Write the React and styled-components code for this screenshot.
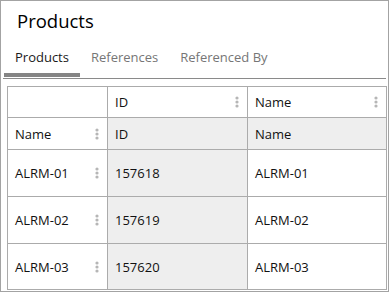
import { Fragment } from "react";
import styled, { createGlobalStyle } from "styled-components";

const GlobalStyle = createGlobalStyle`
  html, body {
    margin: 0;
    padding: 0;
    background: #ffffff;
  }
  body {
    font-family: "Open Sans", "Noto Sans", sans-serif;
    color: #1e1e1e;
  }
`;

const Frame = styled.div`
  box-sizing: border-box;
  width: 389px;
  height: 292px;
  border: 1px solid #a3a3a3;
  display: flex;
  flex-direction: column;
  overflow: hidden;
`;

const Title = styled.h1`
  margin: 7px 0 0 16px;
  font-size: 18.5px;
  line-height: 26px;
  font-weight: normal;
  color: #000000;
`;

const TabBar = styled.div`
  display: flex;
  margin: 14px 2px 0 2px;
  padding-left: 1px;
  border-bottom: 1px solid #8a8a8a;
`;

const Tab = styled.div`
  padding: 0 11px 7px;
  margin-bottom: 1px;
  font-size: 13px;
  line-height: 18px;
  color: ${(p) => (p.$active ? "#1a1a1a" : "#767676")};
  border-bottom: 4px solid ${(p) => (p.$active ? "#858585" : "transparent")};
`;

const Grid = styled.div`
  display: grid;
  grid-template-columns: 100px 140px 139px;
  grid-template-rows: 31px 32px 47px 47px 46px;
  margin: 7px 0 0 6px;
  width: 380px;
  box-sizing: border-box;
  border-left: 1px solid #ababab;
  border-top: 1px solid #ababab;
`;

const Cell = styled.div`
  box-sizing: border-box;
  display: flex;
  align-items: center;
  justify-content: space-between;
  padding: 0 8px 0 7px;
  font-size: 13px;
  color: #111111;
  background: ${(p) => (p.$shaded ? "#eeeeee" : "#ffffff")};
  border-right: 1px solid #ababab;
  border-bottom: 1px solid #ababab;
`;

const Kebab = () => (
  <svg width="4" height="12" viewBox="0 0 4 12">
    <circle cx="2" cy="2" r="1.6" fill="#b6b6b6" />
    <circle cx="2" cy="6" r="1.6" fill="#b6b6b6" />
    <circle cx="2" cy="10" r="1.6" fill="#b6b6b6" />
  </svg>
);

const rows = [
  { name: "ALRM-01", id: "157618" },
  { name: "ALRM-02", id: "157619" },
  { name: "ALRM-03", id: "157620" },
];

const App = () => {
  return (
    <>
      <GlobalStyle />
      <Frame>
        <Title>Products</Title>
        <TabBar>
          <Tab $active>Products</Tab>
          <Tab>References</Tab>
          <Tab>Referenced By</Tab>
        </TabBar>
        <Grid>
          <Cell />
          <Cell>
            ID
            <Kebab />
          </Cell>
          <Cell>
            Name
            <Kebab />
          </Cell>

          <Cell>
            Name
            <Kebab />
          </Cell>
          <Cell $shaded>ID</Cell>
          <Cell $shaded>Name</Cell>

          {rows.map((r) => (
            <Fragment key={r.id}>
              <Cell>
                {r.name}
                <Kebab />
              </Cell>
              <Cell $shaded>{r.id}</Cell>
              <Cell>{r.name}</Cell>
            </Fragment>
          ))}
        </Grid>
      </Frame>
    </>
  );
};

export default App;
